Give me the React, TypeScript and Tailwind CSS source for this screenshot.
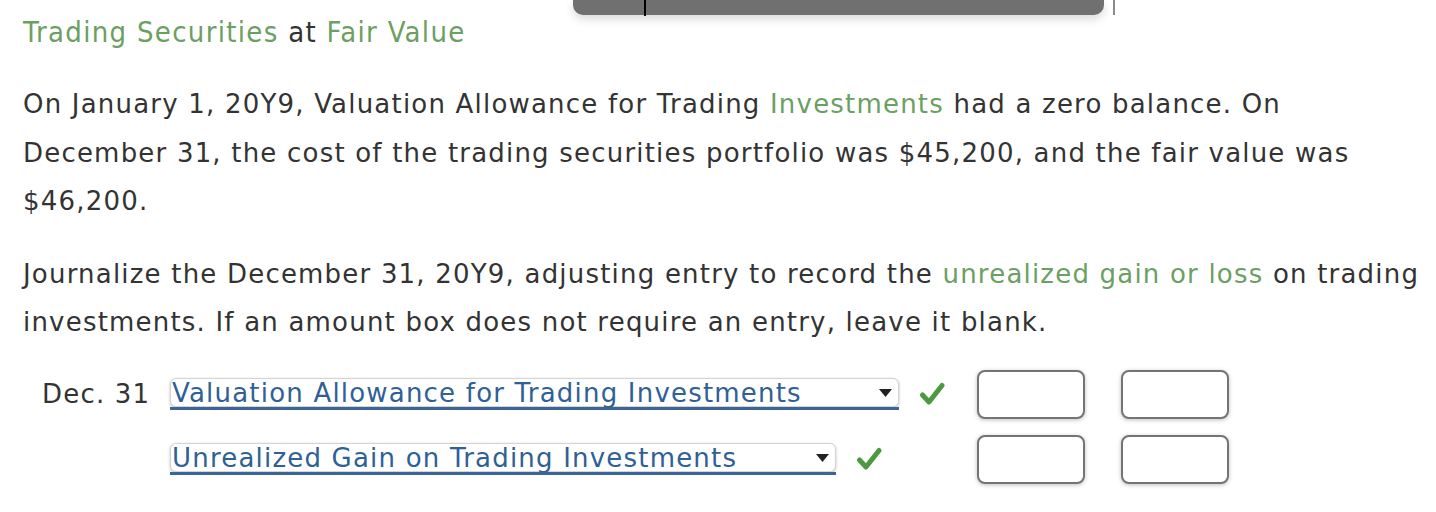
import React from "react";

const green = "text-[#6b9f63]";

function Check() {
  return (
    <svg width="26" height="24" viewBox="0 0 26 24" className="shrink-0">
      <path
        d="M3.5 13 L10 20 L23 3.5"
        fill="none"
        stroke="#4c9a3f"
        strokeWidth="5"
        strokeLinecap="round"
        strokeLinejoin="round"
      />
    </svg>
  );
}

function AccountSelect({ label, width }: { label: string; width: string }) {
  return (
    <div className={`relative ${width} h-[32px]`}>
      <div className="h-[29px] rounded-[6px] border border-[#d4d4d4] bg-white shadow-[0_1px_3px_rgba(0,0,0,0.25)] flex items-center pl-[1px] pr-[6px]">
        <span className="flex-1 text-[#2f6096] text-[26px] tracking-[1.2px] leading-none whitespace-nowrap">{label}</span>
        <svg width="13" height="8" viewBox="0 0 13 8">
          <path d="M0 0 H13 L6.5 8 Z" fill="#222" />
        </svg>
      </div>
      <div className="absolute left-0 right-0 bottom-0 h-[3px] bg-[#3b6596]" />
    </div>
  );
}

function AmountBox() {
  return (
    <div className="w-[108px] h-[49px] rounded-[8px] border-2 border-[#747474] bg-white shadow-[0_1px_4px_rgba(0,0,0,0.25)]" />
  );
}

export default function App() {
  return (
    <div className="relative w-[1436px] h-[512px] bg-white overflow-hidden font-['DejaVu_Sans',Verdana,sans-serif] text-[#333]">
      {/* floating toolbar stub at top */}
      <div className="absolute left-[573px] top-0 w-[531px] h-[15px] rounded-b-[10px] bg-[#707070] shadow-[0_4px_10px_rgba(0,0,0,0.15)]">
        <div className="absolute left-[71px] top-0 w-[2px] h-[16px] bg-black" />
      </div>
      <div className="absolute left-[1113px] top-0 w-[2px] h-[15px] bg-[#8a8a8a]" />

      <div className="pl-[23px] pr-[12px] pt-[13px]">
        <h1 className="font-['DejaVu_Sans_Condensed','DejaVu_Sans',sans-serif] text-[29px] tracking-[1.3px] leading-[38px]">
          <span className={green}>Trading Securities</span> at <span className={green}>Fair Value</span>
        </h1>

        <p className="mt-[29px] text-[26px] tracking-[1.2px] leading-[48.5px]">
          On January 1, 20Y9, Valuation Allowance for Trading <span className={green}>Investments</span> had a zero balance. On December 31, the cost of the trading securities portfolio was $45,200, and the fair value was $46,200.
        </p>

        <p className="mt-[24px] text-[26px] tracking-[1.2px] leading-[48.5px]">
          Journalize the December 31, 20Y9, adjusting entry to record the{" "}
          <span className={green}>unrealized gain or loss</span> on trading investments. If an amount box does not require an entry, leave it blank.
        </p>

        <div className="mt-[23px] flex flex-col gap-[16px]">
          <div className="flex items-center">
            <span className="w-[147px] pl-[19px] text-[26px] tracking-[1.2px]">Dec. 31</span>
            <AccountSelect label="Valuation Allowance for Trading Investments" width="w-[729px]" />
            <div className="w-[66px] flex justify-center"><Check /></div>
            <div className="w-[12px]" />
            <AmountBox />
            <div className="w-[36px]" />
            <AmountBox />
          </div>
          <div className="flex items-center">
            <span className="w-[147px]" />
            <AccountSelect label="Unrealized Gain on Trading Investments" width="w-[666px]" />
            <div className="w-[66px] flex justify-center"><Check /></div>
            <div className="w-[75px]" />
            <AmountBox />
            <div className="w-[36px]" />
            <AmountBox />
          </div>
        </div>
      </div>
    </div>
  );
}
